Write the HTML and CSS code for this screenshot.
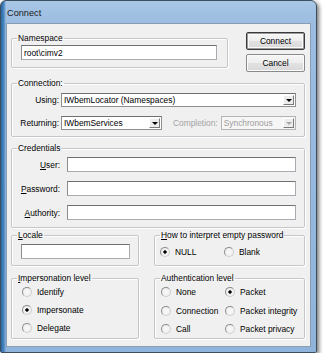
FILE: index.html
```html
<!DOCTYPE html>
<html lang="en">
<head>
    <meta charset="UTF-8">
    <title>Connect</title>
    <link rel="stylesheet" href="styles.css">
</head>
<body>
    <div class="window">
        <div class="titlebar">Connect</div>

        <div class="client">
            <div class="row top-row">
                <fieldset class="group namespace">
                    <legend>Namespace</legend>
                    <div class="body">
                        <input type="text" class="textbox ns-input" value="root\cimv2">
                    </div>
                </fieldset>
                <div class="buttons">
                    <button class="btn default">Connect</button>
                    <button class="btn">Cancel</button>
                </div>
            </div>

            <fieldset class="group connection">
                <legend>Connection:</legend>
                <div class="body form-grid">
                    <label class="field-label">Using:</label>
                    <div class="dropdown wide">
                        <span class="value">IWbemLocator (Namespaces)</span>
                        <span class="arrow"></span>
                    </div>
                    <label class="field-label">Returning:</label>
                    <div class="inline">
                        <div class="dropdown returning">
                            <span class="value">IWbemServices</span>
                            <span class="arrow"></span>
                        </div>
                        <span class="disabled-label">Completion:</span>
                        <div class="dropdown completion disabled">
                            <span class="value">Synchronous</span>
                            <span class="arrow"></span>
                        </div>
                    </div>
                </div>
            </fieldset>

            <fieldset class="group credentials">
                <legend>Credentials</legend>
                <div class="body cred-grid">
                    <label class="field-label"><u>U</u>ser:</label>
                    <input type="text" class="textbox">
                    <label class="field-label"><u>P</u>assword:</label>
                    <input type="password" class="textbox">
                    <label class="field-label"><u>A</u>uthority:</label>
                    <input type="text" class="textbox">
                </div>
            </fieldset>

            <div class="row pair locale-row">
                <fieldset class="group left">
                    <legend><u>L</u>ocale</legend>
                    <div class="body locale-body">
                        <input type="text" class="textbox locale-input">
                    </div>
                </fieldset>
                <fieldset class="group right">
                    <legend><u>H</u>ow to interpret empty password</legend>
                    <div class="body radio-grid how-body">
                        <span class="radio checked">NULL</span>
                        <span class="radio">Blank</span>
                    </div>
                </fieldset>
            </div>

            <div class="row pair level-row">
                <fieldset class="group left">
                    <legend><u>I</u>mpersonation level</legend>
                    <div class="body radio-list imp-body">
                        <span class="radio">Identify</span>
                        <span class="radio checked">Impersonate</span>
                        <span class="radio">Delegate</span>
                    </div>
                </fieldset>
                <fieldset class="group right">
                    <legend>Authentication level</legend>
                    <div class="body radio-grid auth-body">
                        <span class="radio">None</span>
                        <span class="radio checked">Packet</span>
                        <span class="radio">Connection</span>
                        <span class="radio">Packet integrity</span>
                        <span class="radio">Call</span>
                        <span class="radio">Packet privacy</span>
                    </div>
                </fieldset>
            </div>
        </div>
    </div>
</body>
</html>
```

FILE: styles.css
```css
* {
    margin: 0;
    padding: 0;
    box-sizing: border-box;
}

body {
    font-family: 'Liberation Sans', Arial, sans-serif;
    font-size: 8.4px;
    color: #000;
    background: #fff;
}

.window {
    width: 317px;
    height: 353px;
    border: 1px solid #3d4e60;
    border-radius: 6px 6px 2px 2px;
    background:
        linear-gradient(to right, #2a68a3 0, #4c89c0 3px, rgba(150, 185, 222, 0) 5px),
        linear-gradient(to bottom, #a8c6e6 0, #9cbde1 22px, #8fb3da 100%);
    box-shadow: 2px 2px 4px rgba(0, 0, 0, 0.55);
    padding: 0 5px 5px;
    display: flex;
    flex-direction: column;
}

.titlebar {
    height: 22px;
    padding: 7px 0 0 1px;
    font-size: 9.2px;
    color: #1a1a1a;
}

.client {
    flex: 1;
    background: #f0f0f0;
    border: 1px solid #8a9db2;
    padding: 8px 5px 0 4px;
}

.row {
    display: flex;
}

/* group boxes */
.group {
    border: 1px solid #c3c7cc;
    border-radius: 2px;
    box-shadow: inset 1px 1px 0 #fff, 1px 1px 0 #fff;
    padding: 0;
    min-width: 0;
}

.group legend {
    margin-left: 5px;
    padding: 0 1px;
    line-height: 10px;
}

.namespace {
    width: 217px;
    height: 35px;
    margin-top: 1px;
}

.namespace .body {
    padding: 2px 0 0 9px;
}

.ns-input {
    width: 196px;
    height: 16px;
}

.buttons {
    margin-left: 18px;
    display: flex;
    flex-direction: column;
    gap: 4px;
}

.btn {
    width: 59px;
    height: 18px;
    font-family: inherit;
    font-size: 8.4px;
    color: #000;
    background: linear-gradient(to bottom, #f6f6f6 0, #eeeeee 50%, #e2e2e2 51%, #d8d8d8 100%);
    border: 1px solid #8a8a8a;
    border-radius: 2px;
    box-shadow: inset 0 0 0 1px #fbfbfb;
}

.btn.default {
    border: 1px solid #3a3a3a;
    box-shadow: inset 0 0 0 1px #9a9a9a, inset 0 0 0 2px #fafafa;
}

.connection {
    width: 294px;
    height: 59px;
    margin-top: 6px;
}

.form-grid {
    display: grid;
    grid-template-columns: 47px 1fr;
    column-gap: 2px;
    row-gap: 9px;
    align-items: center;
    padding: 5px 8px 0 0;
}

.field-label {
    text-align: right;
    white-space: nowrap;
}

.inline {
    display: flex;
    align-items: center;
}

.dropdown {
    height: 14px;
    background: #fff;
    border: 1px solid #8e8f8f;
    border-top-color: #6f7070;
    display: flex;
    align-items: center;
    padding: 0 1px 0 2px;
}

.dropdown .value {
    flex: 1;
    white-space: nowrap;
    overflow: hidden;
}

.dropdown .arrow {
    width: 11px;
    height: 10px;
    background: #ececec;
    border: 1px solid #fff;
    border-right-color: #7a7a7a;
    border-bottom-color: #7a7a7a;
    position: relative;
}

.dropdown .arrow::after {
    content: '';
    position: absolute;
    left: 2px;
    top: 3px;
    border-left: 3px solid transparent;
    border-right: 3px solid transparent;
    border-top: 3px solid #000;
}

.returning {
    width: 101px;
}

.disabled-label {
    color: #a3a3a3;
    margin: 0 3px 0 11px;
}

.completion {
    width: 75px;
}

.dropdown.disabled {
    background: #f6f6f6;
    border-color: #b4b4b4;
    color: #9c9c9c;
}

.dropdown.disabled .arrow::after {
    border-top-color: #a8a8a8;
}

.credentials {
    width: 294px;
    height: 85px;
    margin-top: 6px;
}

.cred-grid {
    display: grid;
    grid-template-columns: 48px 229px;
    column-gap: 7px;
    row-gap: 9px;
    align-items: center;
    padding: 4px 0 0 0;
}

.textbox {
    display: block;
    height: 15px;
    background: #fff;
    border: 1px solid #a9abb0;
    border-top-color: #6e7074;
    border-left-color: #8b8d92;
    font-family: inherit;
    font-size: 8.4px;
    padding: 0 2px;
    color: #000;
    outline: none;
}

.pair {
    width: 294px;
    gap: 15px;
}

.pair .left {
    width: 128px;
}

.pair .right {
    width: 151px;
}

.locale-row {
    margin-top: 2px;
    height: 36px;
}

.locale-body {
    padding: 4px 0 0 9px;
}

.locale-input {
    width: 109px;
}

.level-row {
    margin-top: 7px;
    height: 66px;
}

/* radio buttons */
.radio {
    display: flex;
    align-items: center;
    gap: 5px;
    height: 12px;
    white-space: nowrap;
}

.radio::before {
    content: '';
    flex: none;
    width: 8px;
    height: 8px;
    border-radius: 50%;
    border: 1px solid #8d8d8d;
    border-bottom-color: #d0d0d0;
    border-right-color: #d0d0d0;
    background: radial-gradient(circle, #fafafa 0, #e9e9e9 100%);
}

.radio.checked::before {
    background: radial-gradient(circle, #000 0 1.4px, #f4f4f4 1.9px, #e6e6e6 100%);
}

.radio-grid {
    display: grid;
    grid-template-columns: 64px 1fr;
}

.how-body {
    padding: 6px 0 0 5px;
}

.radio-list {
    display: flex;
    flex-direction: column;
    gap: 6px;
}

.imp-body {
    padding: 3px 0 0 10px;
}

.auth-body {
    padding: 3px 0 0 6px;
    row-gap: 6.5px;
}
```
